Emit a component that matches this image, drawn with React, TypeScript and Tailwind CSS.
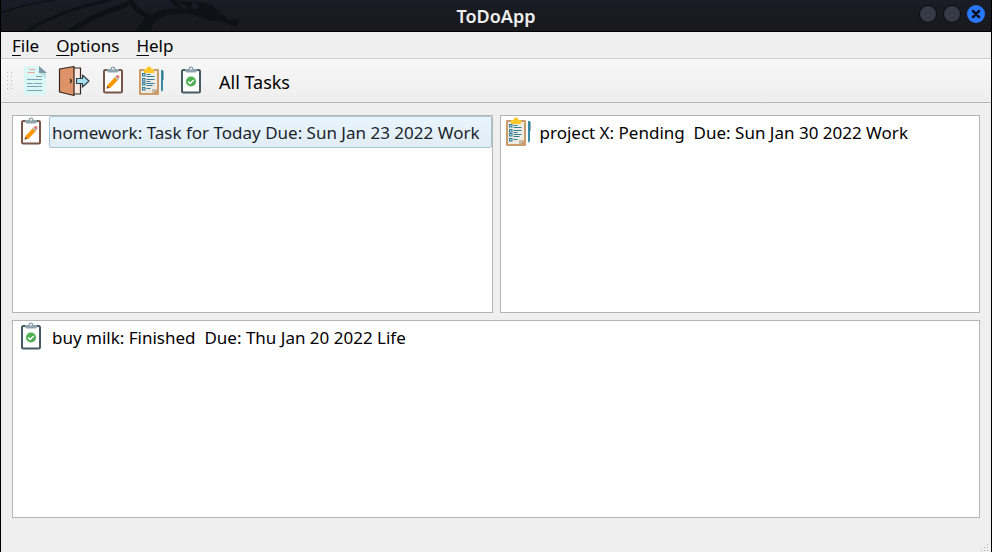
import type { ReactNode } from "react";

function FileIcon() {
  return (
    <svg viewBox="0 0 32 32" className="size-8" aria-hidden="true">
      <path d="M5 1h15l8 7h-1v22H5z" fill="#d9f8f5" />
      <path d="M20 1l8 7h-8z" fill="#7c99a8" />
      <path d="M20 8h7v6z" fill="#bfe0e2" />
      <path d="M10 4.500h6M8.500 7.500h7" stroke="#f2a097" strokeWidth="1.200" />
      <path d="M17 11.500h6M8 14.500h15M8 18.500h6M15 18.500h8M8 21.500h15M8 25.500h15" stroke="#7fa3b6" strokeWidth="1.200" />
    </svg>
  );
}

function DoorIcon() {
  return (
    <svg viewBox="0 0 32 32" className="size-8" aria-hidden="true">
      <path d="M14 3h8.500v26H14z" fill="#fbe9e2" stroke="#33251f" strokeWidth="1.200" />
      <path d="M1.500 4L16 1.500v29L1.500 27z" fill="#dd9367" stroke="#33251f" strokeWidth="1.200" strokeLinejoin="round" />
      <path d="M12 14q2.500 2 0 4" fill="none" stroke="#33251f" strokeWidth="1.500" />
      <path d="M18.500 13.500h6v-3.500l6.500 6-6.500 6v-3.500h-6z" fill="#a9e0ee" stroke="#33414a" strokeWidth="1.200" strokeLinejoin="round" />
    </svg>
  );
}

function Clipboard({ color, children }: { color: string; children: ReactNode }) {
  return (
    <svg viewBox="0 1 32 32" className="size-8" aria-hidden="true">
      <rect x="7" y="6" width="18" height="22.500" rx="1.500" fill="#fff" stroke={color} strokeWidth="2" />
      <path d="M10 5h3.500a2.500 2.500 0 0 1 5 0H22v1.500Q22 8.500 20 8.500h-8q-2 0-2-2z" fill="#90a4ae" />
      <circle cx="16" cy="4.700" r="1" fill="#f5f5f5" />
      {children}
    </svg>
  );
}

function TodayIcon() {
  return (
    <Clipboard color="#795548">
      <path d="M10.500 21l8-8.500 3 3-8 8.300-3.800.9z" fill="#ff9800" />
      <path d="M17.500 13.500l1.200-1.300 3 3-1.200 1.300z" fill="#b0bec5" />
      <path d="M18.700 12.200l1-1q1.200-.7 2.200.3 1 1 .4 2.200l-.9 1.100z" fill="#e57373" />
      <path d="M10.200 21.700l2.100 2.100-2.800.7z" fill="#725044" />
    </Clipboard>
  );
}

function FinishedIcon() {
  return (
    <Clipboard color="#455a64">
      <circle cx="16" cy="17.500" r="5" fill="#4caf50" />
      <path d="M13.200 17.500l2 2 3.500-3.500" fill="none" stroke="#fff" strokeWidth="1.500" />
    </Clipboard>
  );
}

function PendingIcon() {
  return (
    <svg viewBox="0 1 32 32" className="size-8" aria-hidden="true">
      <rect x="3" y="5" width="20" height="26" rx="1" fill="#cb9d6c" />
      <path d="M5 7h16v18l-4 4H5z" fill="#edebe2" />
      <path d="M16 25h5l-4 4h-1z" fill="#c6bca9" />
      <path d="M8 5h2.500q0-2.500 2.500-2.500T15.500 5H18v4H8z" fill="#fcc729" />
      <g fill="none" stroke="#327f9c">
        <g fill="#b7d3dc">
          <rect x="6.500" y="9.500" width="2.500" height="2.500" />
          <rect x="6.500" y="14.500" width="2.500" height="2.500" />
          <rect x="6.500" y="18.500" width="2.500" height="2.500" />
          <rect x="6.500" y="23.500" width="2.500" height="2.500" />
        </g>
        <path d="M10.500 10.500h4M10.500 12.500h8M10.500 15.500h8M10.500 17.500h4M10.500 19.500h8M10.500 21.500h6M10.500 24.500h4" />
      </g>
      <path d="M25 6h2v20l-1 2-1-2z" fill="#388ba5" />
      <path d="M26.500 7h1v9h-1z" fill="#2b7187" />
    </svg>
  );
}

function Dragon() {
  return (
    <svg viewBox="0 0 260 31" className="h-[31px] w-[260px]" aria-hidden="true">
      <g fill="none" stroke="#101117">
        <path d="M0 13Q26 3 54 0" strokeWidth="1.500" />
        <path d="M26 31Q62 9 110 0" strokeWidth="3" />
        <path d="M69 31Q92 15 127 4" strokeWidth="5" />
      </g>
      <g fill="#101117">
        <path d="M126 0h6q7 11 18 15 6-5 19-6 15-1 27 0l8-5 5 7 13 4 6 5 11-1-4 8-13-5-16-2-15-6q-13-2-24 1-13 3-18 16h-14q4-9 10-13-14-7-19-18z" />
        <path d="M169 0q3 7 12 9l-5-8 15 9q-2-5 3-9 2 7 12 9l-12-8z" />
        <path d="M192 1l17 3 13 10-15-4z" />
      </g>
    </svg>
  );
}

function Tool({ label, children }: { label: string; children: ReactNode }) {
  return (
    <button type="button" aria-label={label} className="flex size-8 items-center justify-center">
      {children}
    </button>
  );
}

function TaskPanel({ label, icon, text, selected = false }: { label: string; icon: ReactNode; text: string; selected?: boolean }) {
  return (
    <ul aria-label={label} className="min-w-0 flex-1 border border-[#b5b5b5] bg-white">
      <li className="flex">
        <button type="button" aria-pressed={selected} className="flex min-w-0 flex-1 items-center pl-0.5 text-left">
          {icon}
          <span
            className={
              selected
                ? "ml-0.5 h-8 flex-1 truncate rounded-xs border border-[#a9c5d8] bg-linear-to-b from-[#e9f5fd] to-[#e1ecf4] pl-0.5 leading-8 text-[#1a242b]"
                : "ml-0.5 h-8 flex-1 truncate border border-transparent pl-0.5 leading-8"
            }
          >
            {text}
          </span>
        </button>
      </li>
    </ul>
  );
}

export default function App() {
  return (
    <div className="flex min-h-screen flex-col border-x border-black bg-[#efefef] font-['Noto_Sans',sans-serif] text-[17px] text-black">
      <header className="relative flex h-8 items-center justify-center border-b border-black bg-linear-to-b from-[#191c26] to-[#19191d]">
        <div className="absolute top-0 left-0">
          <Dragon />
        </div>
        <h1 className="relative text-lg font-semibold text-[#eeeeec]">ToDoApp</h1>
        <div className="absolute top-1 right-[5px] flex gap-1">
          <button type="button" aria-label="Minimize" className="flex size-5 items-center justify-center">
            <span className="size-[18px] rounded-full border border-[#0b0c10] bg-[#363a47]" />
          </button>
          <button type="button" aria-label="Maximize" className="flex size-5 items-center justify-center">
            <span className="size-[18px] rounded-full border border-[#0b0c10] bg-[#363a47]" />
          </button>
          <button type="button" aria-label="Close" className="flex size-5 items-center justify-center">
            <svg viewBox="0 0 18 18" className="size-[18px]" aria-hidden="true">
              <circle cx="9" cy="9" r="9" fill="#2777ff" />
              <path d="M6 6l6 6M12 6l-6 6" stroke="#0b0f1c" strokeWidth="2.500" strokeLinecap="round" />
            </svg>
          </button>
        </div>
      </header>
      <nav className="flex h-[27px] items-center gap-[17px] border-b border-[#d0d0d0] px-[11px] pt-0.5 leading-6">
        <button type="button"><span className="underline underline-offset-3 decoration-1">F</span>ile</button>
        <button type="button"><span className="underline underline-offset-3 decoration-1">O</span>ptions</button>
        <button type="button"><span className="underline underline-offset-3 decoration-1">H</span>elp</button>
      </nav>
      <div role="toolbar" aria-label="Tasks" className="flex h-11 items-center gap-[7px] border-b border-[#b8b8b8] bg-linear-to-b from-[#f7f7f7] to-[#eeeeee] pl-1.5">
        <svg viewBox="0 0 5 17" className="h-[17px] w-[5px]" aria-hidden="true">
          <path d="M.5 0v17M4.500 0v17" stroke="#bcbcbc" strokeDasharray="1 3" />
        </svg>
        <Tool label="New task"><FileIcon /></Tool>
        <Tool label="Exit"><DoorIcon /></Tool>
        <Tool label="Today"><TodayIcon /></Tool>
        <Tool label="Pending"><PendingIcon /></Tool>
        <Tool label="Finished"><FinishedIcon /></Tool>
        <button type="button" className="pt-0.5 pl-[5px] text-lg">All Tasks</button>
      </div>
      <main className="flex flex-1 flex-col gap-[7px] px-[11px] pt-3">
        <div className="flex flex-1 gap-[7px]">
          <TaskPanel label="Today" icon={<TodayIcon />} text="homework: Task for Today Due: Sun Jan 23 2022 Work" selected />
          <TaskPanel label="Pending" icon={<PendingIcon />} text={"project X: Pending \u00a0Due: Sun Jan 30 2022 Work"} />
        </div>
        <div className="flex flex-1">
          <TaskPanel label="Finished" icon={<FinishedIcon />} text={"buy milk: Finished \u00a0Due: Thu Jan 20 2022 Life"} />
        </div>
      </main>
      <footer className="flex h-[34px] items-end justify-end">
        <svg viewBox="0 0 10 9" className="h-[9px] w-[10px]" aria-hidden="true">
          <path d="M6 1h1v1H6zM3 4h1v1H3zM6 4h1v1H6zM0 7h1v1H0zM3 7h1v1H3zM6 7h1v1H6z" fill="#adadad" />
        </svg>
      </footer>
    </div>
  );
}
